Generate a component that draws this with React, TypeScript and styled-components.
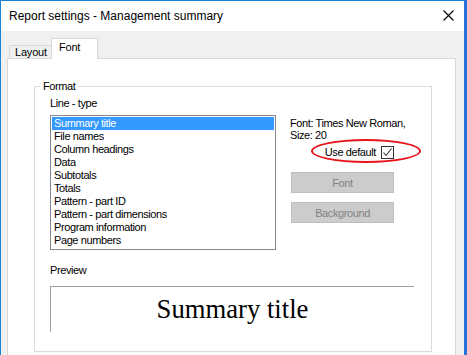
import React from 'react';
import styled, { createGlobalStyle } from 'styled-components';

const lineTypes = [
    'Summary title',
    'File names',
    'Column headings',
    'Data',
    'Subtotals',
    'Totals',
    'Pattern - part ID',
    'Pattern - part dimensions',
    'Program information',
    'Page numbers',
];

const ReportSettings = () => {
    const selected = 0;

    return (
        <Window>
            <GlobalStyle />
            <TitleBar>
                <Title>Report settings - Management summary</Title>
                <CloseIcon width={11} height={11} viewBox="0 0 11 11">
                    <path d="M0.5 0.5 L10.5 10.5 M10.5 0.5 L0.5 10.5" stroke="#000" strokeWidth={1.1} fill="none" />
                </CloseIcon>
            </TitleBar>
            <Body>
                <TabStrip>
                    <Tab>Layout</Tab>
                    <Tab active>Font</Tab>
                </TabStrip>
                <Panel>
                    <GroupBox>
                        <Legend>Format</Legend>
                        <Label>Line - type</Label>
                        <Row>
                            <ListBox>
                                {lineTypes.map((item, i) => (
                                    <ListItem key={item} selected={i === selected}>{item}</ListItem>
                                ))}
                            </ListBox>
                            <Side>
                                <FontInfo>Font: Times New Roman,<br />Size: 20</FontInfo>
                                <DefaultRow>
                                    <span>Use default</span>
                                    <CheckBox>
                                        <svg width={11} height={11} viewBox="0 0 11 11">
                                            <path d="M1.5 5.5 L4 8.5 L9.5 1.5" stroke="#333" strokeWidth={1.1} fill="none" />
                                        </svg>
                                    </CheckBox>
                                    <Marker />
                                </DefaultRow>
                                <Button disabled>Font</Button>
                                <Button disabled>Background</Button>
                            </Side>
                        </Row>
                        <PreviewLabel>Preview</PreviewLabel>
                        <Preview>Summary title</Preview>
                    </GroupBox>
                </Panel>
            </Body>
        </Window>
    );
}

const GlobalStyle = createGlobalStyle`
  html, body {
    margin: 0;
    padding: 0;
    background: #ffffff;
  }
  body {
    font-family: "Liberation Sans", Arial, sans-serif;
  }
`;

const Window = styled.div`
  box-sizing: border-box;
  width: 467px;
  height: 355px;
  overflow: hidden;
  display: flex;
  flex-direction: column;
  border-top: 1px solid #1883d7;
  border-left: 1px solid #1883d7;
  border-right: 3px solid #2a72d9;
  background: #f0f0f0;
`;

const TitleBar = styled.div`
  height: 30px;
  flex-shrink: 0;
  display: flex;
  align-items: center;
  justify-content: space-between;
  padding: 0 10px 0 8px;
  background: #ffffff;
`;

const Title = styled.div`
  font-size: 12px;
  color: #000;
  padding-bottom: 1px;
`;

const CloseIcon = styled.svg`
  display: block;
  margin-bottom: 1px;
`;

const Body = styled.div`
  flex: 1;
  display: flex;
  flex-direction: column;
  padding-left: 6px;
`;

const TabStrip = styled.div`
  height: 27px;
  display: flex;
  align-items: flex-end;
  padding-left: 2px;
  position: relative;
  z-index: 1;
`;

const Tab = styled.div<{active?: boolean}>`
  box-sizing: border-box;
  font-size: 11px;
  letter-spacing: -0.2px;
  color: #000;
  border: 1px solid #d9d9d9;
  border-bottom: none;
  background: ${({active}) => active ? '#ffffff' : '#f0f0f0'};
  height: ${({active}) => active ? '21px' : '13px'};
  width: ${({active}) => active ? '47px' : '43px'};
  margin-left: ${({active}) => active ? '-1px' : '0'};
  margin-bottom: ${({active}) => active ? '-1px' : '0'};
  padding: ${({active}) => active ? '2px 0 0 7px' : '0 0 0 5px'};
  line-height: ${({active}) => active ? '13px' : '12px'};
`;

const Panel = styled.div`
  box-sizing: border-box;
  width: 449px;
  height: 320px;
  flex-shrink: 0;
  border: 1px solid #d9d9d9;
  background: #ffffff;
  padding: 27px 0 0 26px;
`;

const GroupBox = styled.div`
  position: relative;
  box-sizing: border-box;
  width: 398px;
  height: 266px;
  border: 1px solid #dcdcdc;
  padding: 10px 0 0 15px;
  font-size: 11px;
  letter-spacing: -0.4px;
  color: #000;
`;

const Legend = styled.span`
  position: absolute;
  top: -7px;
  left: 5px;
  padding: 0 3px;
  line-height: 13px;
  background: #ffffff;
`;

const Label = styled.div`
  line-height: 13px;
  margin-bottom: 5px;
`;

const Row = styled.div`
  display: flex;
  align-items: flex-start;
`;

const ListBox = styled.div`
  box-sizing: border-box;
  width: 226px;
  height: 135px;
  border: 1px solid #828790;
  padding: 1px;
`;

const ListItem = styled.div<{selected?: boolean}>`
  height: 13px;
  line-height: 13px;
  padding-left: 2px;
  white-space: nowrap;
  background: ${({selected}) => selected ? '#3399ff' : 'transparent'};
  color: ${({selected}) => selected ? '#ffffff' : '#000000'};
`;

const Side = styled.div`
  width: 104px;
  margin-left: 14px;
  padding-top: 2px;
  display: flex;
  flex-direction: column;
`;

const FontInfo = styled.div`
  line-height: 12px;
  white-space: nowrap;
`;

const DefaultRow = styled.div`
  position: relative;
  display: flex;
  align-items: center;
  justify-content: flex-end;
  gap: 5px;
  height: 13px;
  line-height: 13px;
  margin-top: 5px;
`;

const CheckBox = styled.div`
  box-sizing: border-box;
  width: 13px;
  height: 13px;
  border: 1px solid #333333;
  background: #ffffff;
  display: flex;
  align-items: center;
  justify-content: center;
`;

const Marker = styled.div`
  position: absolute;
  left: 21px;
  top: -7px;
  width: 110px;
  height: 24px;
  box-sizing: border-box;
  border: 2px solid #e8131b;
  border-radius: 50%;
`;

const Button = styled.button`
  box-sizing: border-box;
  width: 103px;
  height: 21px;
  margin: 13px 0 0 1px;
  padding: 0;
  border: 1px solid #bfbfbf;
  background: #cccccc;
  color: #838383;
  font-family: "Liberation Sans", Arial, sans-serif;
  font-size: 11px;
  letter-spacing: -0.4px;

  & + & {
    margin-top: 9px;
  }
`;

const PreviewLabel = styled.div`
  line-height: 13px;
  margin-top: 14px;
`;

const Preview = styled.div`
  box-sizing: border-box;
  width: 364px;
  height: 46px;
  margin-top: 9px;
  border-top: 1px solid #a0a0a0;
  border-left: 1px solid #a0a0a0;
  padding-top: 7px;
  text-align: center;
  font-family: "Liberation Serif", "Times New Roman", serif;
  font-size: 26.67px;
  letter-spacing: 0;
  line-height: 31px;
  color: #000;
`;

export default ReportSettings;
